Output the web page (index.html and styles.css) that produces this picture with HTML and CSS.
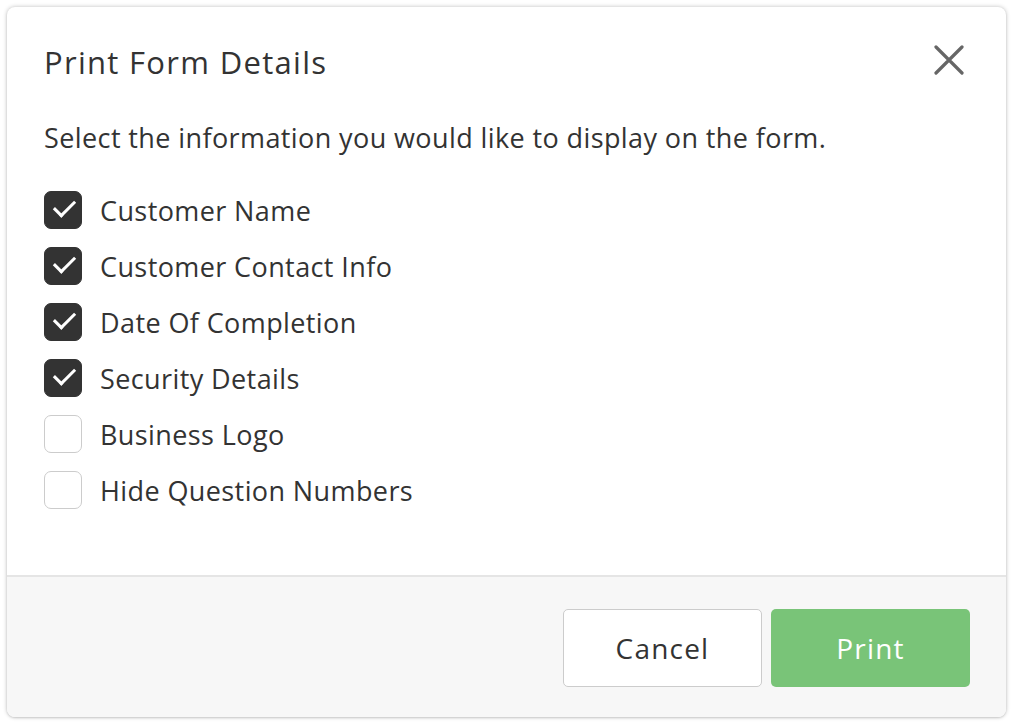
FILE: index.html
```html
<!DOCTYPE html>
<html lang="en">
<head>
    <meta charset="UTF-8">
    <title>Print Form Details</title>
    <link rel="stylesheet" href="styles.css">
</head>
<body>
    <!-- Print dialog -->
    <div class="dialog">
        <div class="dialog-body">
            <div class="dialog-header">
                <h1>Print Form Details</h1>
                <button class="close-btn" aria-label="Close">
                    <svg width="30" height="30" viewBox="0 0 30 30">
                        <path d="M2 2 L28 28 M28 2 L2 28" stroke="#666" stroke-width="3.2" stroke-linecap="round" fill="none"/>
                    </svg>
                </button>
            </div>
            <p class="intro">Select the information you would like to display on the form.</p>

            <ul class="options">
                <li><span class="box checked"></span>Customer Name</li>
                <li><span class="box checked"></span>Customer Contact Info</li>
                <li><span class="box checked"></span>Date Of Completion</li>
                <li><span class="box checked"></span>Security Details</li>
                <li><span class="box"></span>Business Logo</li>
                <li><span class="box"></span>Hide Question Numbers</li>
            </ul>
        </div>

        <div class="dialog-footer">
            <button class="btn btn-cancel">Cancel</button>
            <button class="btn btn-print">Print</button>
        </div>
    </div>
</body>
</html>
```

FILE: styles.css
```css
body {
    font-family: 'Open Sans', 'Lato', sans-serif;
    background-color: #fff;
    color: #333;
    margin: 0;
    padding: 7px 8px 8px 7px;
}

/* Dialog */
.dialog {
    width: 999px;
    height: 710px;
    background-color: #fff;
    border-radius: 8px;
    box-shadow: 0 0 4px rgba(0, 0, 0, 0.25), 0 1px 2px rgba(0, 0, 0, 0.1);
    display: flex;
    flex-direction: column;
    overflow: hidden;
}

.dialog-body {
    flex: 1;
    padding: 0 28px 0 37px;
}

.dialog-header {
    display: flex;
    justify-content: space-between;
    align-items: center;
    height: 110px;
}

h1 {
    font-size: 31px;
    font-weight: 400;
    margin: 0;
    color: #333;
    letter-spacing: 1.3px;
}

.close-btn {
    background: none;
    border: none;
    padding: 0;
    width: 30px;
    height: 30px;
    margin: 0 14px 4px 0;
    cursor: pointer;
}

.intro {
    font-size: 27px;
    margin: 5px 0 28px 0;
    line-height: 32px;
    letter-spacing: 0.4px;
}

.options {
    list-style: none;
    margin: 0;
    padding: 0;
}

.options li {
    display: flex;
    align-items: center;
    height: 56px;
    font-size: 27px;
    letter-spacing: 0.4px;
}

.box {
    width: 36px;
    height: 36px;
    border: 1px solid #ccc;
    border-radius: 7px;
    margin-right: 18px;
    box-sizing: content-box;
    background-color: #fff;
    position: relative;
}

.box.checked {
    background-color: #333;
    border-color: #333;
}

.box.checked::after {
    content: "";
    position: absolute;
    left: 9px;
    top: 8px;
    width: 18px;
    height: 9px;
    border-left: 3px solid #fff;
    border-bottom: 3px solid #fff;
    transform: rotate(-45deg);
}

/* Footer */
.dialog-footer {
    height: 142px;
    background-color: #f7f7f7;
    border-top: 2px solid #e5e5e5;
    display: flex;
    justify-content: flex-end;
    align-items: center;
    gap: 9px;
    padding: 2px 36px 0 0;
    box-sizing: border-box;
}

.btn {
    width: 199px;
    height: 78px;
    font-family: inherit;
    font-size: 28px;
    letter-spacing: 1.2px;
    border-radius: 5px;
    cursor: pointer;
}

.btn-cancel {
    background-color: #fff;
    border: 1px solid #ccc;
    color: #333;
}

.btn-print {
    background-color: #79c478;
    border: none;
    color: #fff;
}
```
